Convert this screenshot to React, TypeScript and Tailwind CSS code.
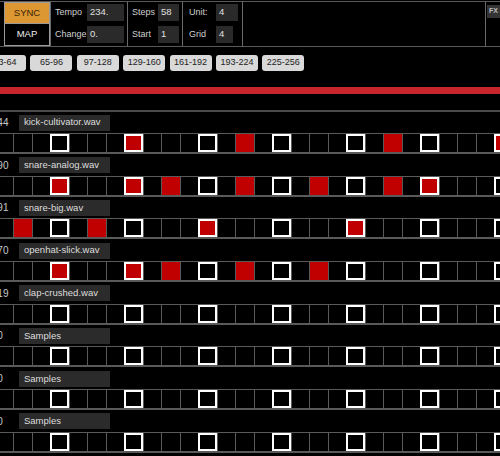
import React from 'react';

type Track = { level: string; name: string; on: number[] };

const TRACKS: Track[] = [
  { level: '0.44', name: 'kick-cultivator.wav', on: [7, 13, 21, 27] },
  { level: '0.90', name: 'snare-analog.wav', on: [3, 7, 9, 13, 17, 21, 23] },
  { level: '0.91', name: 'snare-big.wav', on: [1, 5, 11, 19] },
  { level: '0.70', name: 'openhat-slick.wav', on: [3, 7, 9, 13, 17] },
  { level: '0.19', name: 'clap-crushed.wav', on: [] },
  { level: '0.0', name: 'Samples', on: [] },
  { level: '0.0', name: 'Samples', on: [] },
  { level: '0.0', name: 'Samples', on: [] },
];

const PAGES = ['33-64', '65-96', '97-128', '129-160', '161-192', '193-224', '225-256'];

const CELLS = Array.from({ length: 28 }, (_, i) => i);

const Field: React.FC<{ label: string; value: string; labelW: string; boxW: string }> = ({ label, value, labelW, boxW }) => (
  <div className="flex items-center h-[17px]">
    <span className={`${labelW} text-[9px] text-[#d0d0d0]`}>{label}</span>
    <span className={`${boxW} h-[17px] bg-[#2a2a2a] text-[9.5px] text-[#e0e0e0] pl-[3px] flex items-center`}>{value}</span>
  </div>
);

const StepRow: React.FC<{ on: number[] }> = ({ on }) => (
  <div className="-ml-[5.5px] w-[518px] h-[21px] grid grid-cols-[repeat(28,18.5px)] border-t border-b-2 border-[#5a5a5a]">
    {CELLS.map((i) => {
      const beat = i % 4 === 3;
      const active = on.includes(i);
      return (
        <div
          key={i}
          className={`h-full box-border ${active ? 'bg-[#c00000]' : 'bg-black'} ${
            beat ? 'border-2 border-white' : 'border-l border-[#5a5a5a]'
          }`}
        />
      );
    })}
  </div>
);

export default function App() {
  return (
    <div className="w-[500px] h-[456px] bg-black overflow-hidden font-['Liberation_Sans',Arial,sans-serif]">
      {/* top bar */}
      <div className="h-[46px] mt-[1px] border-t border-b border-[#5a5a5a] flex">
        <div className="w-[51px] pl-[4px] flex flex-col border-r border-[#6a6a6a]">
          <div className="h-[22px] bg-[#dc9632] border border-[#9a9a9a] flex items-center justify-center text-[9.5px] text-[#3a2608]">
            SYNC
          </div>
          <div className="h-[22px] bg-black border border-t-0 border-[#9a9a9a] flex items-center justify-center text-[9.5px] text-[#f0f0f0]">
            MAP
          </div>
        </div>
        <div className="w-[77px] pl-[4px] pt-[2px] flex flex-col gap-[5px] border-r border-[#6a6a6a]">
          <Field label="Tempo" value="234." labelW="w-[32px]" boxW="w-[37px]" />
          <Field label="Change" value="0." labelW="w-[32px]" boxW="w-[37px]" />
        </div>
        <div className="w-[55px] pl-[4px] pt-[2px] flex flex-col gap-[5px] border-r border-[#6a6a6a]">
          <Field label="Steps" value="58" labelW="w-[26px]" boxW="w-[21px]" />
          <Field label="Start" value="1" labelW="w-[26px]" boxW="w-[21px]" />
        </div>
        <div className="w-[60px] pl-[6px] pt-[2px] flex flex-col gap-[5px] border-r border-[#6a6a6a]">
          <Field label="Unit:" value="4" labelW="w-[27px]" boxW="w-[22px]" />
          <Field label="Grid" value="4" labelW="w-[27px]" boxW="w-[17px]" />
        </div>
        <div className="flex-1 border-r border-[#6a6a6a]" />
        <div className="w-[14px] pl-[1px] pt-[3px]">
          <div className="w-[16px] h-[13px] bg-[#353535] text-[7px] font-bold text-[#bdbdbd] flex items-center pl-[2px]">
            FX
          </div>
        </div>
      </div>

      {/* pages */}
      <div className="mt-[8px] -ml-[16px] flex gap-[4.4px]">
        {PAGES.map((p) => (
          <div
            key={p}
            className="w-[42px] h-[16px] shrink-0 rounded-[3px] bg-[#d9d9d9] text-[9px] text-[#222] flex items-center justify-center"
          >
            {p}
          </div>
        ))}
      </div>

      {/* playhead bar */}
      <div className="mt-[16px] h-[7px] bg-[#c8262a]" />
      <div className="mt-[16px] h-[2px] bg-[#4a4a4a]" />

      {/* tracks */}
      <div className="pt-[2px]">
        {TRACKS.map((t, idx) => (
          <div key={idx} className="h-[42.7px]">
            <div className="flex items-center h-[17px]">
              <span className="-ml-[11px] w-[30px] text-[10px] text-[#c8c8c8]">{t.level}</span>
              <span className="w-[91px] h-[16px] bg-[#2b2b2b] text-[9.5px] text-[#dedede] pl-[5px] flex items-center">
                {t.name}
              </span>
            </div>
            <div className="mt-[2px]">
              <StepRow on={t.on} />
            </div>
          </div>
        ))}
      </div>
    </div>
  );
}
